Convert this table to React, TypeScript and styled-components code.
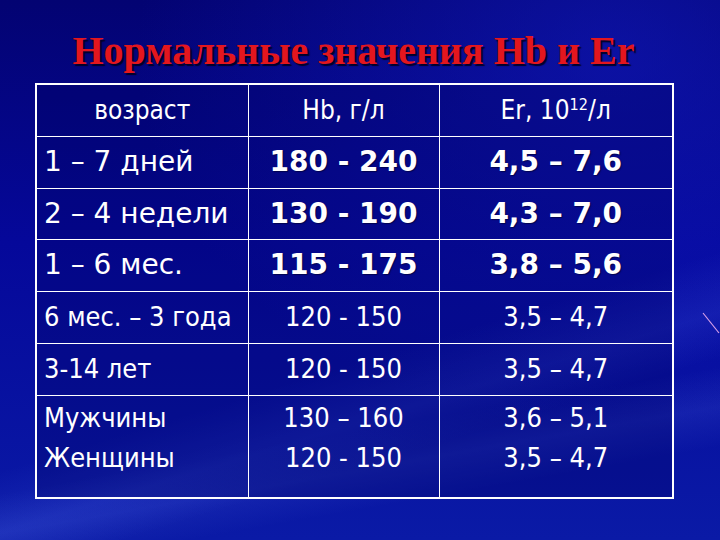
import React from "react";
import styled, { createGlobalStyle, css } from "styled-components";

const GlobalStyle = createGlobalStyle`
  html, body {
    margin: 0;
    padding: 0;
    background: #050a8c;
  }
  #root {
    width: 720px;
    height: 540px;
  }
`;

const Slide = styled.div`
  position: relative;
  width: 720px;
  height: 540px;
  box-sizing: border-box;
  padding: 0 0 0 35px;
  overflow: hidden;
  background:
    linear-gradient(163deg, transparent 62%, rgba(90, 120, 255, 0.14) 70%, transparent 76%),
    linear-gradient(170deg, transparent 74%, rgba(110, 140, 255, 0.12) 80%, transparent 86%),
    radial-gradient(ellipse at 85% 10%, rgba(20, 30, 200, 0.5), transparent 55%),
    linear-gradient(180deg, #030372 0%, #05089a 45%, #0a1aa6 100%);
`;

const Title = styled.h1`
  width: 637px;
  height: 83px;
  margin: 0;
  padding-top: 31px;
  box-sizing: border-box;
  text-align: center;
  font-family: "Liberation Serif", "Times New Roman", serif;
  font-weight: bold;
  font-size: 40px;
  line-height: 40px;
  color: #e3161e;
  text-shadow: 2px 2px 1px rgba(0, 0, 30, 0.9);
`;

const Table = styled.table`
  width: 637px;
  border-collapse: collapse;
  border: 2px solid #ffffff;
  background: rgba(0, 0, 90, 0.28);
  color: #ffffff;
  table-layout: fixed;
`;

const Row = styled.tr<{ $height: number }>`
  height: ${(p) => p.$height}px;
`;

const Cell = styled.td<{ $center?: boolean; $big?: boolean; $bold?: boolean; $top?: boolean; $head?: boolean }>`
  border: 1px solid #ffffff;
  padding: 0 0 0 7px;
  text-align: ${(p) => (p.$center ? "center" : "left")};
  vertical-align: ${(p) => (p.$top ? "top" : "middle")};
  white-space: nowrap;
  font-family: "DejaVu Sans Condensed", "DejaVu Sans", sans-serif;
  font-stretch: condensed;
  font-size: ${(p) => (p.$head ? 26 : 27)}px;
  line-height: 40px;
  ${(p) =>
    p.$center &&
    css`
      padding: 0;
    `}
  ${(p) =>
    (p.$big || p.$bold) &&
    css`
      font-family: "DejaVu Sans", sans-serif;
      font-stretch: normal;
      font-size: 28px;
    `}
  ${(p) =>
    p.$bold &&
    css`
      font-weight: bold;
      text-shadow: 1px 1px 1px rgba(0, 0, 40, 0.6);
    `}
  ${(p) =>
    p.$top &&
    css`
      padding-top: 2px;
    `}
`;

const Sup = styled.sup`
  font-size: 0.62em;
  line-height: 0;
  vertical-align: 0.55em;
`;

const Streak = styled.svg`
  position: absolute;
  right: 0;
  top: 312px;
`;

const cols = [212, 191, 234];

const mainRows = [
  ["1 – 7 дней", "180 - 240", "4,5 – 7,6"],
  ["2 – 4 недели", "130 - 190", "4,3 – 7,0"],
  ["1 – 6 мес.", "115 - 175", "3,8 – 5,6"],
];

const smallRows = [
  ["6 мес. – 3 года", "120 - 150", "3,5 – 4,7"],
  ["3-14 лет", "120 - 150", "3,5 – 4,7"],
];

export default function App() {
  return (
    <>
      <GlobalStyle />
      <Slide>
        <Title>Нормальные значения Hb и Er</Title>
        <Table>
          <colgroup>
            {cols.map((w, i) => (
              <col key={i} style={{ width: w }} />
            ))}
          </colgroup>
          <tbody>
            <Row $height={52}>
              <Cell $center $head>возраст</Cell>
              <Cell $center $head>Hb, г/л</Cell>
              <Cell $center $head>
                Er, 10<Sup>12</Sup>/л
              </Cell>
            </Row>
            {mainRows.map((r, i) => (
              <Row key={i} $height={i === 1 ? 51 : 52}>
                <Cell $big>{r[0]}</Cell>
                <Cell $center $bold>
                  {r[1]}
                </Cell>
                <Cell $center $bold>
                  {r[2]}
                </Cell>
              </Row>
            ))}
            {smallRows.map((r, i) => (
              <Row key={i} $height={52}>
                <Cell>{r[0]}</Cell>
                <Cell $center>{r[1]}</Cell>
                <Cell $center>{r[2]}</Cell>
              </Row>
            ))}
            <Row $height={103}>
              <Cell $top>
                Мужчины
                <br />
                Женщины
              </Cell>
              <Cell $center $top>
                130 – 160
                <br />
                120 - 150
              </Cell>
              <Cell $center $top>
                3,6 – 5,1
                <br />
                3,5 – 4,7
              </Cell>
            </Row>
          </tbody>
        </Table>
        <Streak width="18" height="24" viewBox="0 0 18 24">
          <line x1="1" y1="1" x2="17" y2="21" stroke="#d9a0e8" strokeWidth="1.2" />
        </Streak>
      </Slide>
    </>
  );
}
